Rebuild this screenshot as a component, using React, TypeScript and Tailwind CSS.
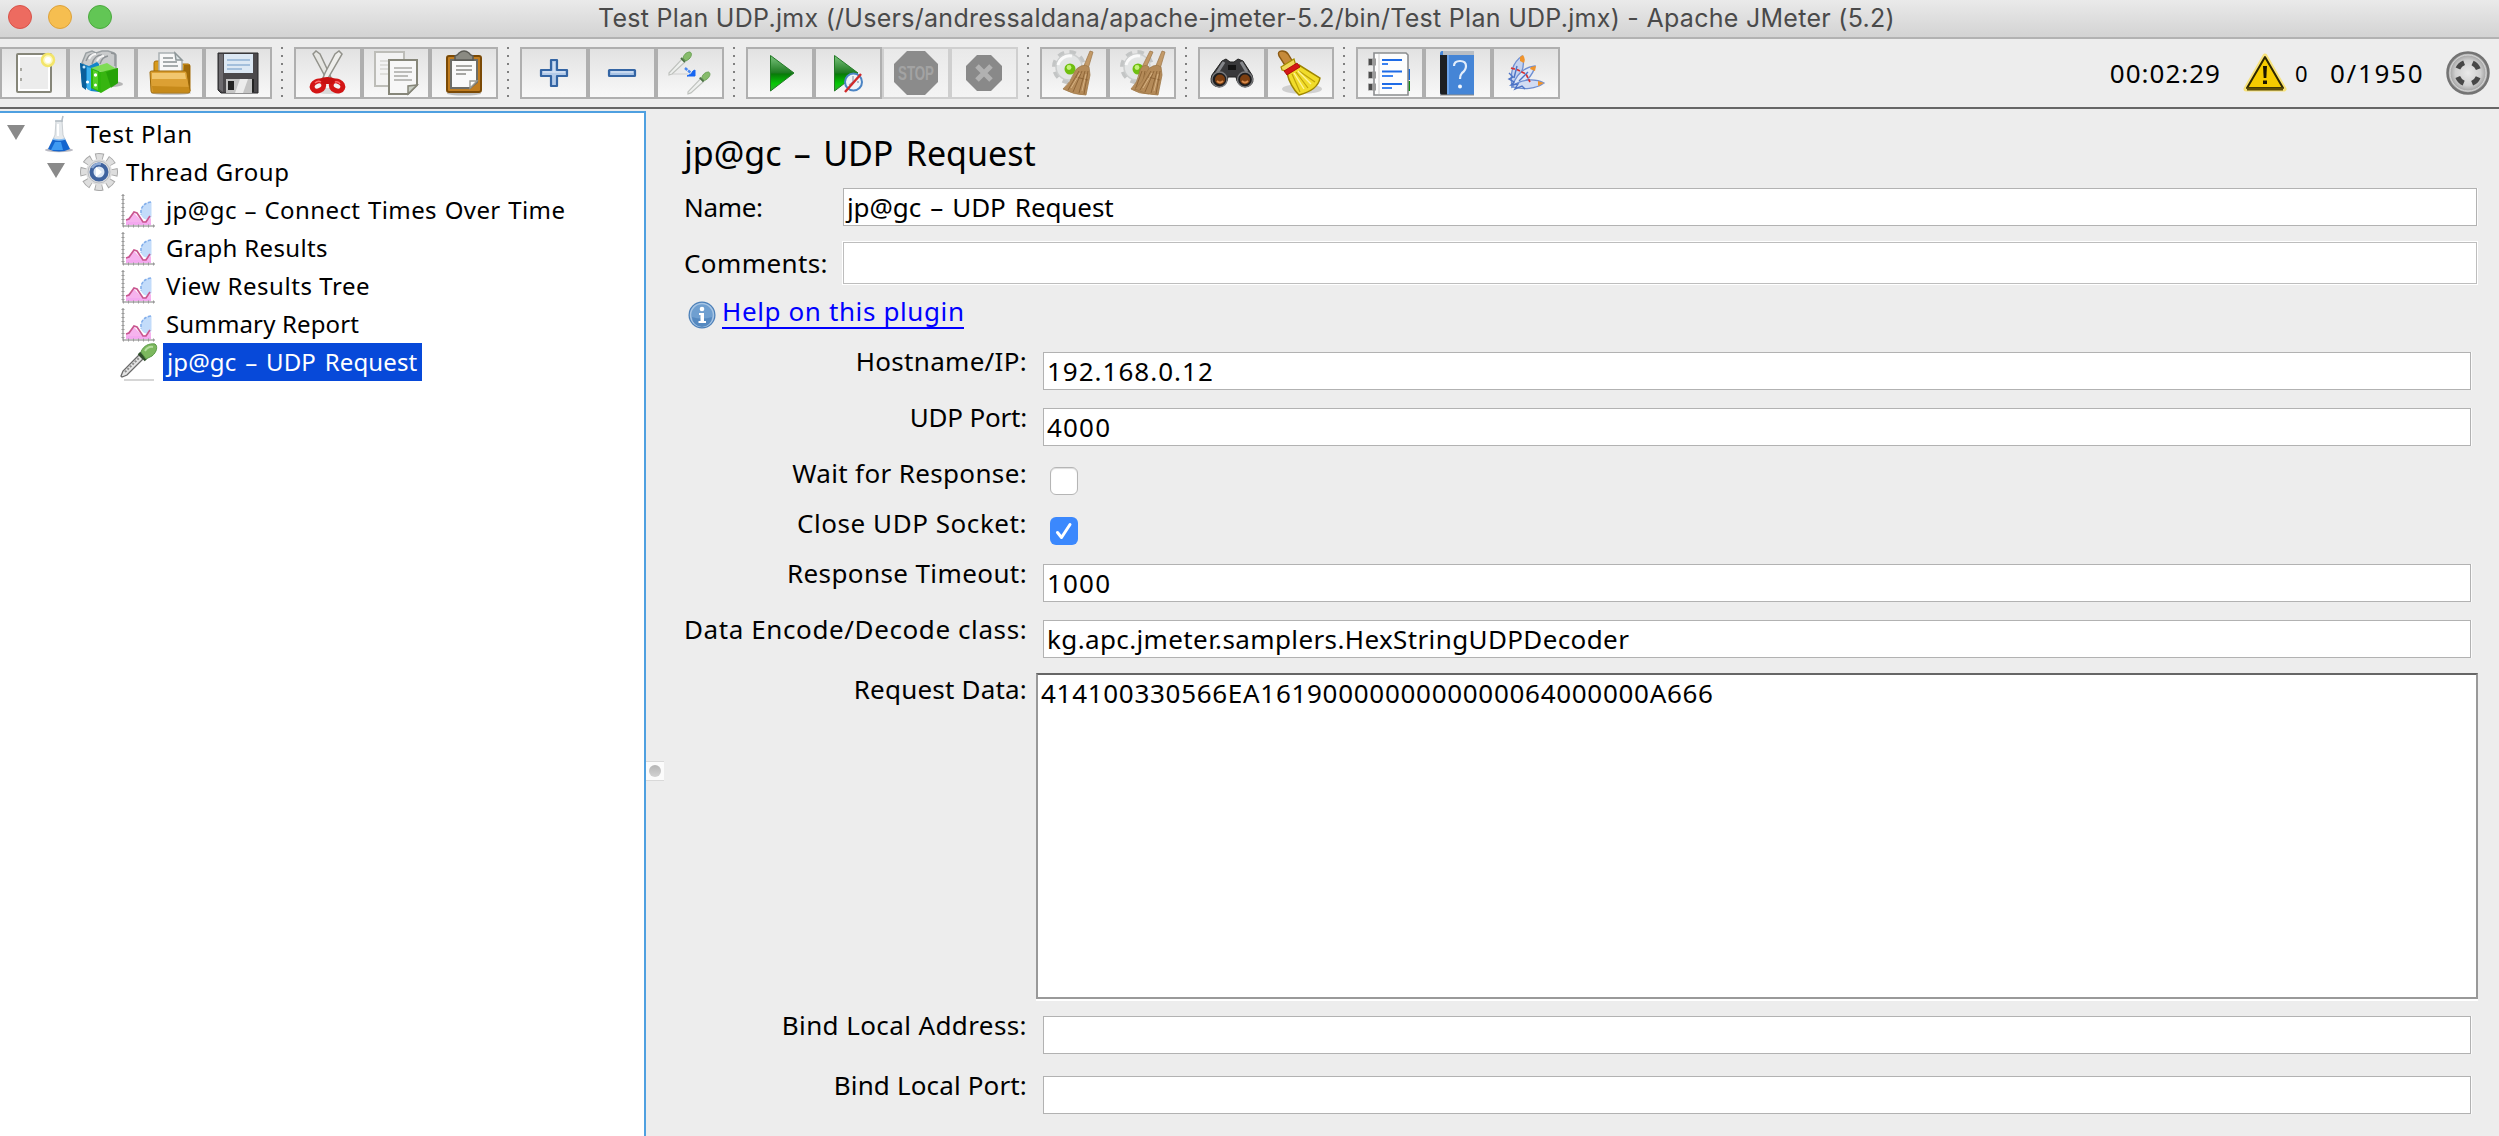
import type { ReactNode } from "react";

/* ---------- toolbar icons (each drawn in the 68x52 box of its button) ---------- */

const NewIcon = (
  <>
    <rect x="17" y="7" width="34" height="38" rx="1" fill="#ececec" stroke="#868679" strokeWidth="2" />
    <rect x="19" y="9" width="30" height="34" fill="none" stroke="#fff" strokeWidth="2" />
    <path d="M21 21v3M21 31v3" stroke="#a9a9a3" strokeWidth="2" />
    <circle cx="48" cy="13" r="6" fill="#fdf9c0" stroke="#f3e56a" strokeWidth="2.5" />
    <circle cx="48" cy="13" r="3" fill="#fff" />
  </>
);

const TemplatesIcon = (
  <>
    <ellipse cx="44" cy="37" rx="11" ry="3" fill="#777" opacity=".5" />
    <path d="M14 16 18 6l6-2 4 2 6-2h6l6 2 2 2v14l-24 2z" fill="#c9cbcc" stroke="#9aa0a3" strokeWidth="1.5" />
    <path d="M18 14c2-6 5-7 8-7M24 17c2-7 5-9 10-9M32 17c2-6 4-7 8-8M43 6l4 1v12" fill="none" stroke="#8f9396" strokeWidth="1.4" />
    <path d="M21 12c2-4 4-5 7-5M29 14c2-4 4-5 7-5" fill="none" stroke="#f4f4f4" strokeWidth="2" />
    <path d="M12 16l9 3 8-4 2 2v28l-8-1-9-6z" fill="#1485c9" />
    <path d="M12 16l6 3v24l-4-3z" fill="#0a5f9b" />
    <path d="M19 20l4 1v23l-4-2z" fill="#3bb0ee" />
    <path d="M23 21l10 4v21l-10-5z" fill="#2fb50b" />
    <path d="M25 23l5 2v18l-5-2z" fill="#55d02a" />
    <path d="M33 25 23 21l16-5 11 7z" fill="#7fdc55" />
    <path d="M33 25l17-4v15L33 46z" fill="#37b510" />
    <path d="M38 25l12-4v15l-7 5z" fill="#1f9a06" opacity=".7" />
    <circle cx="27.500" cy="28" r="1.700" fill="#fff" />
    <circle cx="27.500" cy="38" r="1.500" fill="#fff" />
    <circle cx="19.500" cy="35" r="1.600" fill="#fff" />
    <circle cx="16" cy="20" r="1.500" fill="#bfe6fb" />
  </>
);

const OpenIcon = (
  <>
    <ellipse cx="35" cy="46" rx="20" ry="2" fill="#999" opacity=".5" />
    <path d="M18 16q0-2 2-2h5l2 3h25q2 0 2 2v25H18z" fill="#d79a1c" stroke="#a86e08" strokeWidth="1" />
    <path d="M48 18h6v26l-8 1z" fill="#8c5a04" opacity=".75" />
    <path d="M23 6h16l7 8v14H23z" fill="#f8f8f8" stroke="#a9b0b2" strokeWidth="1.500" />
    <path d="M39 6l1 7h6z" fill="#dfe6e8" stroke="#8d9698" strokeWidth="1.500" />
    <path d="M27 11h10M27 15h14M27 19h15" stroke="#8b9193" strokeWidth="1.600" />
    <path d="M14 25q0-1 2-1h33q2 0 2 2l3 18q0 2-2 2H17q-2 0-2-2z" fill="#dca033" stroke="#9c6909" strokeWidth="1" />
    <path d="M16 26h33l1 6H16z" fill="#f6cf7d" opacity=".8" />
    <path d="M16 39l37 1 1 5H17z" fill="#bd800f" opacity=".7" />
  </>
);

const SaveIcon = (
  <>
    <path d="M14 6h40v40H17l-3-3z" fill="#4b494c" stroke="#29282b" strokeWidth="1" />
    <path d="M15 7h4v38l-4-3z" fill="#6d6b6f" />
    <rect x="20" y="7" width="29" height="19" fill="#dce8f4" />
    <path d="M23 13h23M23 18h23M23 22h15" stroke="#a3bfdc" strokeWidth="2" />
    <rect x="22" y="32" width="26" height="14" fill="#c4c4c4" />
    <path d="M36 32h8l-5 14h-8z" fill="#ececec" />
    <rect x="24" y="34" width="6" height="9" fill="#232323" />
    <path d="M49 32v13" stroke="#232323" strokeWidth="2" />
  </>
);

const CutIcon = (
  <>
    <ellipse cx="35" cy="44" rx="15" ry="3" fill="#bbb" opacity=".5" />
    <path d="M19 7l3-3 4 3 9 19 2 5-4 2z" fill="#e6e6e2" stroke="#92928b" strokeWidth="1.500" />
    <path d="M48 7l-3-3-4 3-10 19-2 5 4 2z" fill="#efefec" stroke="#92928b" strokeWidth="1.500" />
    <ellipse cx="24" cy="39" rx="6" ry="4.800" fill="none" stroke="#d31515" strokeWidth="5" transform="rotate(-25 24 39)" />
    <ellipse cx="43" cy="39" rx="6" ry="4.800" fill="none" stroke="#d31515" strokeWidth="5" transform="rotate(25 43 39)" />
    <path d="M25 32q8-4 17 0l-4 5h-9z" fill="#c81010" />
    <path d="M21 36q3-3 6-1M41 35q4-1 5 2" fill="none" stroke="#ff6a6a" strokeWidth="1.400" />
  </>
);

const CopyIcon = (
  <>
    <rect x="13" y="5" width="29" height="34" fill="#f3f3f3" stroke="#bdbdb8" strokeWidth="2" />
    <path d="M18 14h8M18 18h8M18 22h8M18 27h8" stroke="#d7d7d4" strokeWidth="1.600" />
    <path d="M27 13h28v25l-9 9H27z" fill="#f7f7f7" stroke="#868679" strokeWidth="2" />
    <path d="M46 47v-8l9-1z" fill="#c9cec4" stroke="#868679" strokeWidth="1.500" />
    <path d="M32 21h18M32 25h18M32 29h14M32 33h18" stroke="#bcbcb9" strokeWidth="1.800" />
  </>
);

const PasteIcon = (
  <>
    <ellipse cx="34" cy="46.500" rx="17" ry="2" fill="#999" opacity=".6" />
    <rect x="17" y="9" width="34" height="36" rx="2" fill="#c17d20" stroke="#7b4a06" strokeWidth="2" />
    <path d="M21 13h26v22l-7 6H21z" fill="#fafafa" stroke="#6d6d68" strokeWidth="2" />
    <path d="M40 41v-7h7z" fill="#fff" stroke="#9b9b93" strokeWidth="1.400" />
    <path d="M26 19h16M26 23h16M26 27h10" stroke="#a7a7a4" strokeWidth="1.800" />
    <path d="M25 13V9q3-1 4-3 5-4 10 0 1 2 4 3v4z" fill="#8a8a82" stroke="#5b5b55" strokeWidth="1.500" />
  </>
);

const PlusIcon = (
  <>
    <path d="M31 13h6v10h10v6H37v10h-6V29H21v-6h10z" fill="#b4cbe9" stroke="#3465a4" strokeWidth="2.200" strokeLinejoin="round" />
    <path d="M34 15v10M23 25h22" stroke="#d5e2f3" strokeWidth="1.600" />
  </>
);

const MinusIcon = (
  <>
    <rect x="21" y="23" width="26" height="6" fill="#a9c4e6" stroke="#3465a4" strokeWidth="2.200" rx=".5" />
    <path d="M23 25h22" stroke="#d0dff2" strokeWidth="1.600" />
  </>
);

const Pipette = ({ t }: { t: string }) => (
  <g transform={t}>
    <path d="M1 21 14 7l3 3L4 22l-3 1z" fill="#eef0ee" stroke="#bfc2be" strokeWidth="1.200" />
    <path d="M13 6l4 4" stroke="#4c7343" strokeWidth="2" />
    <path d="M15 6c1-4 4-6 7-6 2 1 2 4-1 7l-3 2z" fill="#86bb6a" stroke="#6aa155" strokeWidth="1" />
  </g>
);

const ToggleIcon = (
  <>
    <path d="M16 27h16" stroke="#d9d9d9" strokeWidth="1.500" />
    <Pipette t="translate(12 5)" />
    <Pipette t="translate(31 25) scale(.98 .95)" />
    <path d="M29 21l6 5" stroke="#4a88f0" strokeWidth="2.500" strokeDasharray="3 1" />
    <path d="M39 23v6h-8l4-2 2-3z" fill="#1666f2" stroke="#1666f2" />
  </>
);

const StartIcon = (
  <path d="M24.500 8.500 48 26 24.500 44z" fill="url(#play)" stroke="#237a26" strokeWidth="1" />
);

const StartNoTimersIcon = (
  <>
    <path d="M20.500 8.500 44 26 20.500 44z" fill="url(#play)" stroke="#237a26" strokeWidth="1" />
    <circle cx="39.500" cy="35" r="8.500" fill="#eff3f8" stroke="#4b84c4" strokeWidth="2" />
    <path d="M39 29v6l-4 3M45 35h-2" stroke="#9aa6b4" strokeWidth="1.300" fill="none" />
    <path d="M47 27 31 45" stroke="#d02a2a" strokeWidth="2.400" />
  </>
);

const StopIcon = (
  <>
    <path d="M25 4h18l13 13v18L43 48H25L12 35V17z" fill="#8b8b8b" />
    <text x="34" y="33" textAnchor="middle" textLength="36" lengthAdjust="spacingAndGlyphs" className="font-['Liberation_Sans'] text-[20px] font-bold" fill="#a3a3a3">STOP</text>
  </>
);

const ShutdownIcon = (
  <>
    <path d="M27 8h14l11 11v14L41 44H27L16 33V19z" fill="#898989" />
    <path d="M27 19l14 14M41 19 27 33" stroke="#b1b1b1" strokeWidth="5" />
  </>
);

const GearShape = (
  <>
    <circle cx="29" cy="20" r="14" fill="none" stroke="#c3c5c5" strokeWidth="6" strokeDasharray="6 5" />
    <circle cx="29" cy="20" r="13" fill="#e3e5e5" stroke="#cccece" strokeWidth="1.500" />
    <path d="M18 18a12 12 0 0 1 14-9" stroke="#fafafa" strokeWidth="3" fill="none" />
    <circle cx="30" cy="22" r="5.500" fill="#6fbf10" />
    <circle cx="29" cy="20.500" r="2.400" fill="#c4f27a" />
  </>
);

const Broom = (
  <>
    <path d="M50 4l3 1-5 17-5-1z" fill="#c39a68" stroke="#9b7446" strokeWidth=".7" />
    <path d="M41 19q5-2 8 1l1 8-4 20q-12 0-23-6 8-7 11-16 2-5 7-7z" fill="#b48a58" stroke="#a07a4a" strokeWidth=".8" />
    <path d="M39 24 28 43M42 24l-9 21M45 24l-6 22M48 24l-4 23M36 30l12 3" stroke="#8b6234" strokeWidth=".9" fill="none" />
    <path d="M40 26 31 41M46 27l-4 17" stroke="#d6b283" strokeWidth="1" />
  </>
);

const ClearIcon = (
  <>
    {GearShape}
    {Broom}
  </>
);

const ClearAllIcon = (
  <>
    {GearShape}
    <g transform="translate(-1 0)">
      <path d="M43 4l3 1-7 16-4-1z" fill="#c39a68" stroke="#9b7446" strokeWidth=".7" />
      <path d="M36 19q4-2 6 1v27q-10 0-18-5 7-7 8-15 1-6 4-8z" fill="#b48a58" stroke="#a07a4a" strokeWidth=".8" />
      <path d="M35 24 28 43M38 24l-4 21" stroke="#8b6234" strokeWidth=".9" />
    </g>
    <g transform="translate(4 0)">{Broom}</g>
  </>
);

const SearchIcon = (
  <>
    <path d="M24 14l4-2 4 3h4l4-3 5 2 9 14q3 8-3 11-8 3-12-5l-1-4h-8l-1 4q-4 8-12 5-6-3-3-11z" fill="#39393b" stroke="#222" />
    <path d="M26 15l-7 11M43 15l6 10" stroke="#85878b" strokeWidth="3" />
    <path d="M30 18h8v5h-8z" fill="#131313" />
    <circle cx="21.500" cy="32.500" r="7.500" fill="#1d1d1f" stroke="#77787b" strokeWidth="1.400" />
    <circle cx="47" cy="32.500" r="7.500" fill="#1d1d1f" stroke="#77787b" strokeWidth="1.400" />
    <circle cx="22" cy="32.500" r="5" fill="#7b3e10" />
    <circle cx="47" cy="32.500" r="5" fill="#7b3e10" />
    <path d="M19 34q3 3 6 0M44 34q3 3 6 0" stroke="#d98b4c" strokeWidth="1.800" fill="none" />
  </>
);

const SearchResetIcon = (
  <>
    <ellipse cx="36" cy="42" rx="20" ry="5" fill="#999" opacity=".4" />
    <path d="M13 9q-2-5 3-5 4 0 6 3l5 8-7 5z" fill="#c68a3a" stroke="#8b5a14" strokeWidth="1.400" />
    <path d="M15 20l13-8 2 7-9 5-5-1z" fill="#f0d95a" stroke="#a58d00" strokeWidth="1.200" />
    <path d="M21 26l12-8 21 13q-2 12-21 17-9-9-12-22z" fill="#f1dc2a" stroke="#9f8700" strokeWidth="1.500" />
    <path d="M26 27l8 18M30 25l12 16M33 24l16 11" stroke="#bfa30a" strokeWidth="1.200" />
    <path d="M28 26l10 16M32 24l13 13" stroke="#fff39a" strokeWidth="1.400" />
    <path d="M18 24l13-8 3 4-13 8z" fill="#d31818" stroke="#a40000" strokeWidth=".8" />
  </>
);

const FunctionIcon = (
  <>
    <rect x="50" y="22" width="4" height="11" fill="#1668d8" />
    <rect x="50" y="34" width="4" height="10" fill="#0e8a10" />
    <path d="M18 6h32l2 2v40H18z" fill="#fdfdfd" stroke="#8b8d8f" strokeWidth="1.600" />
    <path d="M23 7v40" stroke="#dcdcdc" strokeWidth="1.400" />
    <path d="M12 15h8M12 28h8M12 40h8" stroke="#9a9a9a" strokeWidth="7" />
    <path d="M13 15h3M13 28h3M13 40h3" stroke="#4c4c4c" strokeWidth="6" />
    <path d="M26 13h20M26 24.500h20M26 37h20" stroke="#1e6be6" strokeWidth="2.200" />
    <path d="M26 17h6M26 29h11M26 41h10" stroke="#3d83f0" strokeWidth="2" />
  </>
);

const HelpIcon = (
  <>
    <path d="M18 4h32v44H18q-2 0-2-3V7q0-3 2-3z" fill="#4585d6" />
    <path d="M19 4h31v4H19z" fill="#b9bec4" />
    <path d="M16 8h7v40h-5q-2 0-2-3z" fill="#1d1f22" />
    <path d="M24 8v39" stroke="#78aef0" strokeWidth="1.500" />
    <path d="M30 19q0-5 6-5t6 5q0 4-4 7-2 2-2 6" fill="none" stroke="#e4eefb" strokeWidth="2.200" />
    <circle cx="36" cy="39.500" r="2" fill="#f2f7fd" />
    <path d="M16 48h34" stroke="#8a8a8a" strokeWidth="1" />
  </>
);

const FeatherIcon = (
  <>
    <path d="M20 40c-2-14 0-24 10-31 4 10 0 19-8 29z" fill="#c5d2ee" stroke="#6f8fd2" strokeWidth="1.300" />
    <path d="M20 40c4-12 11-20 23-21-2 10-11 18-20 21z" fill="#dfe6f6" stroke="#6f8fd2" strokeWidth="1.300" />
    <path d="M20 39c10-7 23-8 32-3-8 6-21 7-30 4z" fill="#d2dcf3" stroke="#6f8fd2" strokeWidth="1.300" />
    <path d="M28 10l3-2q3 4 1 8l-4-2zM39 20l5-1-1 5-5-2zM46 34l6 2-6 3z" fill="#f0942c" />
    <path d="M19 21l7 2 8 4 4 8" fill="none" stroke="#d83030" strokeWidth="1.700" strokeDasharray="4 1.500" />
    <path d="M17 26l4 4-4 2 5 3-3 3 7-1-3 5 7-3 3 3M25 19l-3 12M36 25 27 34" stroke="#4d73c6" strokeWidth="1.400" fill="none" />
  </>
);

type Tool = { icon: ReactNode; disabled?: boolean };

const toolGroups: Tool[][] = [
  [{ icon: NewIcon }, { icon: TemplatesIcon }, { icon: OpenIcon }, { icon: SaveIcon }],
  [{ icon: CutIcon }, { icon: CopyIcon }, { icon: PasteIcon }],
  [{ icon: PlusIcon }, { icon: MinusIcon }, { icon: ToggleIcon }],
  [{ icon: StartIcon }, { icon: StartNoTimersIcon }, { icon: StopIcon, disabled: true }, { icon: ShutdownIcon, disabled: true }],
  [{ icon: ClearIcon }, { icon: ClearAllIcon }],
  [{ icon: SearchIcon }, { icon: SearchResetIcon }],
  [{ icon: FunctionIcon }, { icon: HelpIcon }, { icon: FeatherIcon }],
];

function ToolButton({ icon, disabled }: Tool) {
  return (
    <button
      className={
        disabled
          ? "h-[52px] w-[68px] border-2 border-[#cfcfcf] bg-linear-to-b from-[#e9e9e9] to-[#f4f4f4]"
          : "h-[52px] w-[68px] border-2 border-[#afafaf] bg-linear-to-b from-[#e2e2e2] to-[#f8f8f8]"
      }
    >
      <svg width="64" height="48" viewBox="2 2 64 48" className="block">
        {icon}
      </svg>
    </button>
  );
}

function Separator() {
  return (
    <div className="flex w-[22px] flex-col gap-[6px] pl-[9px]">
      {[0, 1, 2, 3, 4, 5, 6].map((i) => (
        <span key={i} className="size-[2px] bg-[#808080]" />
      ))}
    </div>
  );
}

function TitleBar() {
  return (
    <header className="flex h-[39px] items-start border-b-2 border-[#b2b2b2] bg-linear-to-b from-[#eaeaea] to-[#d3d3d3]">
      <div className="flex w-[598px] gap-4 pt-[5px] pl-2">
        <span className="size-6 rounded-full border border-[#d8534a] bg-[#ed6b60]" />
        <span className="size-6 rounded-full border border-[#dda23b] bg-[#f6be50]" />
        <span className="size-6 rounded-full border border-[#4ca93f] bg-[#62c655]" />
      </div>
      <h1 className="font-['Inter',sans-serif] text-[25px] leading-9 tracking-[0.28px] whitespace-nowrap text-[#4a4a4a]">
        Test Plan UDP.jmx (/Users/andressaldana/apache-jmeter-5.2/bin/Test Plan UDP.jmx) - Apache JMeter (5.2)
      </h1>
    </header>
  );
}

function Toolbar() {
  return (
    <div className="flex h-[70px] items-start border-b-2 border-[#666] pt-2">
      {toolGroups.map((group, i) => (
        <div key={i} className="flex">
          {i > 0 && <Separator />}
          {group.map((tool, j) => (
            <ToolButton key={j} {...tool} />
          ))}
        </div>
      ))}
      <div className="ml-auto flex h-[52px] items-center pr-[9px]">
        <span className="tracking-[1px] leading-[52px]">00:02:29</span>
        <svg width="44" height="40" viewBox="0 0 44 40" className="ml-[22px]">
          <path d="M22 3 41 36H3z" fill="#f5cb00" stroke="#f7e27a" strokeWidth="5" strokeLinejoin="round" />
          <path d="M22 4 40 35H4z" fill="#f5cb00" stroke="#2d2600" strokeWidth="2" strokeLinejoin="round" />
          <path d="M4 36h36" stroke="#5d4c05" strokeWidth="3" />
          <path d="M20 13h4l-.700 12h-2.600z" fill="#1b1600" />
          <rect x="20" y="27.500" width="4" height="3.500" fill="#1b1600" />
        </svg>
        <span className="ml-[8px] w-[13px] text-[22px] leading-[52px]">0</span>
        <span className="ml-[22px] w-[93px] tracking-[1.700px] leading-[52px]">0/1950</span>
        <svg width="44" height="44" viewBox="0 0 44 44" className="ml-[23px]">
          <circle cx="22" cy="22" r="20.500" fill="#b2b2b2" stroke="#747474" strokeWidth="2.500" />
          <circle cx="22" cy="22" r="18" fill="url(#knob)" stroke="#d8d8d8" strokeWidth="1" />
          <circle cx="22" cy="22" r="11" fill="none" stroke="#474747" strokeWidth="5" strokeDasharray="8.640 8.640" strokeDashoffset="-4.320" />
        </svg>
      </div>
    </div>
  );
}

/* ---------- test plan tree ---------- */

function Twisty() {
  return (
    <svg width="18" height="15" viewBox="0 0 18 15" className="mb-[3px]">
      <path d="M0 0h18L9 15z" fill="#8a8a8a" />
    </svg>
  );
}

function FlaskIcon() {
  return (
    <svg width="40" height="38" viewBox="0 0 40 38">
      <ellipse cx="20" cy="35" rx="14" ry="2.200" fill="#8b8b9a" opacity=".6" />
      <path d="M17 6h6l1 14 6 13q-10 4-20 0l6-13z" fill="#e5e9ec" stroke="#c9ced2" strokeWidth="1" />
      <path d="M14 24q6 2 12 0l5 10q-11 5-22 0z" fill="#1466cf" />
      <path d="M16 27h6l2 8H12z" fill="#3f9bf3" />
      <path d="M14 24q6 2 12 0" stroke="#86bdf3" strokeWidth="1.500" fill="none" />
      <path d="M16 6h8M22.500 7 24 1" stroke="#b5bec5" strokeWidth="1.500" />
      <path d="M19 9v12" stroke="#fff" strokeWidth="2" />
    </svg>
  );
}

function GearIcon() {
  return (
    <svg width="40" height="38" viewBox="0 0 40 38">
      <circle cx="20" cy="19" r="15.500" fill="none" stroke="#a8a8a8" strokeWidth="7" strokeDasharray="8 4.170" strokeDashoffset="4" />
      <circle cx="20" cy="19" r="15" fill="none" stroke="#dedede" strokeWidth="6" strokeDasharray="6 5.780" strokeDashoffset="3" />
      <circle cx="20" cy="19" r="13" fill="#dedede" />
      <circle cx="20" cy="19" r="11" fill="none" stroke="#b9bcc2" strokeWidth="1" />
      <circle cx="20" cy="19" r="7.500" fill="#dbe6f4" stroke="#3f639f" strokeWidth="4" />
      <path d="M13 15a8 8 0 0 1 9-4" stroke="#8fabd6" strokeWidth="2.500" fill="none" />
      <path d="M17 14l6 5-6 5z" fill="#fff" />
    </svg>
  );
}

function ChartIcon() {
  return (
    <svg width="40" height="38" viewBox="0 0 40 38">
      <path d="M7 34v-5l8-7 9 9 8-4v7z" fill="#f6b3ee" />
      <path d="M7 34v-3l16 0 9 1v2z" fill="#f4a9f0" />
      <path d="M32.500 11c-9 0-13 8-10 14 3 5 7 4 10 1z" fill="#c3dcfa" />
      <path d="M32 11q-8 1-10 8v5" fill="none" stroke="#82aeea" strokeWidth="1.500" strokeDasharray="3 1.500" />
      <path d="M7 29l3-1 5-7 3 1 6 9 3 0 4-6" fill="none" stroke="#c9568f" strokeWidth="1.700" />
      <path d="M4 3v32h32" fill="none" stroke="#a8a8a8" strokeWidth="1.500" />
      <path d="M4 4v32" stroke="#9a9a9a" strokeWidth="3" strokeDasharray="1 3" />
      <path d="M4 35h32" stroke="#9a9a9a" strokeWidth="3" strokeDasharray="1 4" />
    </svg>
  );
}

function DropperIcon() {
  return (
    <svg width="40" height="38" viewBox="0 0 40 38">
      <path d="M5 37h30" stroke="#c9c9c9" strokeWidth="1.500" />
      <path d="M2 33 4 28 20 12l4 4L8 32l-5 2z" fill="#e3e3e3" stroke="#6a6a6a" strokeWidth="1.300" />
      <path d="M6 29 20 15" stroke="#8e8e8e" strokeWidth="2" strokeDasharray="2 1.500" />
      <path d="M20 10l7 7" stroke="#2f4f2a" strokeWidth="3.500" />
      <path d="M22 9c2-6 8-9 14-8 3 2 2 8-3 12l-6 3z" fill="#7cb85e" stroke="#5b9a47" strokeWidth="1" />
      <path d="M26 8q3-5 8-4" stroke="#b6dd9f" strokeWidth="2" fill="none" />
    </svg>
  );
}

const leaves = [
  { label: "jp@gc – Connect Times Over Time", tracking: "tracking-[0.4px] [word-spacing:1px]" },
  { label: "Graph Results", tracking: "tracking-[0.35px]" },
  { label: "View Results Tree", tracking: "tracking-[0.55px]" },
  { label: "Summary Report", tracking: "tracking-[0.15px]" },
];

function Tree() {
  return (
    <aside className="mt-[2px] w-[646px] shrink-0 border-t-2 border-r-2 border-[#4fa0e0] bg-white pt-[2px] text-2xl leading-[38px] whitespace-nowrap">
      <div className="flex h-[38px] items-center pl-[7px]">
        <Twisty />
        <span className="ml-[14px]"><FlaskIcon /></span>
        <span className="ml-[7px] tracking-[0.67px]">Test Plan</span>
      </div>
      <div className="flex h-[38px] items-center pl-[47px]">
        <Twisty />
        <span className="ml-[14px]"><GearIcon /></span>
        <span className="ml-[7px] tracking-[0.58px]">Thread Group</span>
      </div>
      {leaves.map(({ label, tracking }) => (
        <div key={label} className="flex h-[38px] items-center pl-[119px]">
          <ChartIcon />
          <span className={`ml-[7px] ${tracking}`}>{label}</span>
        </div>
      ))}
      <div className="flex h-[38px] items-center pl-[119px]">
        <DropperIcon />
        <span className="ml-[4px] w-[259px] bg-[#0749d9] pl-[4px] tracking-[0.1px] text-white [word-spacing:2.5px]">jp@gc – UDP Request</span>
      </div>
    </aside>
  );
}

/* ---------- sampler form ---------- */

function FieldBox({ value, tracking = "" }: { value?: string; tracking?: string }) {
  return (
    <div className="mt-[10px] h-[38px] w-[1428px] border border-[#b2b2b2] bg-white pl-[3px] leading-[36px] shadow-[1px_0_0_#fafafa]">
      <span className={tracking}>{value}</span>
    </div>
  );
}

function FormRow({ label, tracking, height, children }: { label: string; tracking: string; height: string; children: ReactNode }) {
  return (
    <div className={`flex items-start ${height}`}>
      <div className="w-[346px] shrink-0 pr-[3px] text-right leading-[38px] whitespace-nowrap">
        <span className={tracking}>{label}</span>
      </div>
      {children}
    </div>
  );
}

function SamplerPanel() {
  return (
    <main className="flex flex-col pl-[20px]">
      <h2 className="mt-[17px] h-[62px] text-[34px] leading-[54px] tracking-[0px] [word-spacing:3.5px]">jp@gc – UDP Request</h2>
      <div className="flex h-[54px]">
        <div className="w-[159px] tracking-[-0.3px] leading-[38px]">Name:</div>
        <div className="h-[38px] w-[1634px] border border-[#b2b2b2] bg-white pl-[3px] leading-[36px] tracking-[-0.1px] [word-spacing:2.5px] shadow-[1px_0_0_#fafafa]">
          jp@gc – UDP Request
        </div>
      </div>
      <div className="flex h-[50px]">
        <div className="w-[159px] tracking-[0.4px] leading-[42px]">Comments:</div>
        <div className="h-[42px] w-[1634px] border border-[#bdbdbd] bg-white shadow-[0_0_0_1px_#fff]" />
      </div>
      <div className="flex h-[50px] items-start pl-[4px]">
        <svg width="28" height="28" viewBox="0 0 28 28" className="mt-[9px]">
          <circle cx="14" cy="14" r="13.500" fill="#4b7fb8" />
          <circle cx="14" cy="14" r="11.500" fill="#6f9fd0" stroke="#a7c5e4" strokeWidth="1.500" />
          <path d="M4 16a10 10 0 0 0 20 0q-10 3-20 0z" fill="#5589c0" />
          <circle cx="14" cy="8" r="2.300" fill="#fff" />
          <path d="M11 12h5v8h2v2h-7.500v-2h2v-6H11z" fill="#fff" />
        </svg>
        <a className="ml-[6px] h-[37px] w-[242px] border-b-2 border-[#0000ff] leading-[38px] tracking-[0.62px] whitespace-nowrap text-[#0000ff]">
          Help on this plugin
        </a>
      </div>
      <div className="flex flex-col">
        <FormRow label="Hostname/IP:" tracking="tracking-[0.3px]" height="h-[56px]">
          <div className="pl-[13px]"><FieldBox value="192.168.0.12" tracking="tracking-[1px]" /></div>
        </FormRow>
        <FormRow label="UDP Port:" tracking="tracking-[-0.2px]" height="h-[56px]">
          <div className="pl-[13px]"><FieldBox value="4000" tracking="tracking-[1.17px]" /></div>
        </FormRow>
        <FormRow label="Wait for Response:" tracking="tracking-[0.35px]" height="h-[50px]">
          <div className="mt-[13px] ml-[20px] size-7 rounded-md border border-[#b5b5b5] bg-white shadow-[inset_0_1px_1px_#ddd]" />
        </FormRow>
        <FormRow label="Close UDP Socket:" tracking="tracking-[0.55px]" height="h-[50px]">
          <div className="mt-[13px] ml-[20px] size-7 rounded-md bg-[#3b88fd]">
            <svg width="28" height="28" viewBox="0 0 28 28">
              <path d="M7.500 15.500l4 5L20 7.500" fill="none" stroke="#fff" strokeWidth="3" strokeLinecap="round" strokeLinejoin="round" />
            </svg>
          </div>
        </FormRow>
        <FormRow label="Response Timeout:" tracking="tracking-[0.4px]" height="h-[56px]">
          <div className="pl-[13px]"><FieldBox value="1000" tracking="tracking-[1.17px]" /></div>
        </FormRow>
        <FormRow label="Data Encode/Decode class:" tracking="tracking-[0.6px]" height="h-[60px]">
          <div className="pl-[13px]"><FieldBox value="kg.apc.jmeter.samplers.HexStringUDPDecoder" tracking="tracking-[0.38px]" /></div>
        </FormRow>
        <FormRow label="Request Data:" tracking="tracking-[0.2px]" height="h-[336px]">
          <div className="mt-[3px] ml-[6px] h-[326px] w-[1442px] border-2 border-[#999] border-t-[#666] bg-white pl-[3px] leading-[36px] tracking-[0.7px] shadow-[0_2px_0_#fff]">
            414100330566EA1619000000000000064000000A666
          </div>
        </FormRow>
        <FormRow label="Bind Local Address:" tracking="tracking-[0.4px]" height="h-[60px]">
          <div className="pl-[13px]"><FieldBox /></div>
        </FormRow>
        <FormRow label="Bind Local Port:" tracking="tracking-[0.15px]" height="h-[60px]">
          <div className="pl-[13px]"><FieldBox /></div>
        </FormRow>
      </div>
    </main>
  );
}

export default function App() {
  return (
    <div className="flex h-[1136px] w-[2499px] flex-col overflow-hidden bg-[#ededed] font-['Noto_Sans','Open_Sans',sans-serif] text-[26px] text-black">
      <svg width="0" height="0" className="absolute">
        <defs>
          <linearGradient id="play" x1="0" y1="0" x2="0" y2="1">
            <stop offset="0" stopColor="#7cc47e" />
            <stop offset=".49" stopColor="#1d7a20" />
            <stop offset=".52" stopColor="#087a08" />
            <stop offset=".8" stopColor="#06c806" />
            <stop offset="1" stopColor="#35a835" />
          </linearGradient>
          <radialGradient id="knob">
            <stop offset="0" stopColor="#e9e9e9" />
            <stop offset=".7" stopColor="#cfcfcf" />
            <stop offset="1" stopColor="#a4a4a4" />
          </radialGradient>
        </defs>
      </svg>
      <TitleBar />
      <Toolbar />
      <div className="flex grow">
        <Tree />
        <div className="flex w-[18px] flex-col pt-[652px]">
          <div className="flex h-5 w-[18px] items-center justify-center border-y border-[#d9d9d9] bg-[#fbfbfb]">
            <span className="size-3 rounded-full bg-linear-to-b from-[#b5b5b5] to-[#d2d2d2]" />
          </div>
        </div>
        <SamplerPanel />
      </div>
    </div>
  );
}
